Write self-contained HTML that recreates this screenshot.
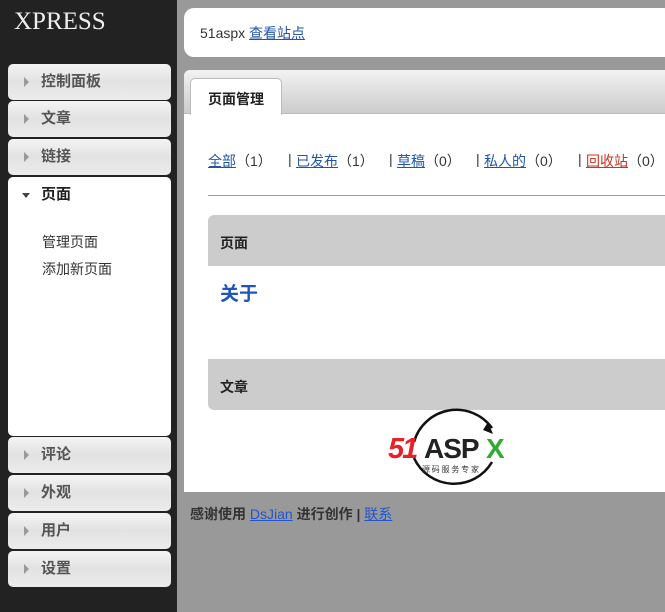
<!DOCTYPE html>
<html><head><meta charset="utf-8"><style>
*{margin:0;padding:0;box-sizing:border-box}
body{width:665px;height:612px;overflow:hidden;background:#999;font-family:"Liberation Sans","Noto Sans CJK SC",sans-serif;font-size:14px;color:#333;position:relative}
#side{position:absolute;left:0;top:0;width:177px;height:612px;background:#222}
#logo{position:absolute;left:14px;top:8px;color:#eee;font-family:"Liberation Serif",serif;font-size:25px}
.mi{position:absolute;left:8px;width:163px;height:36px;border-radius:5px;background:linear-gradient(#f4f4f4,#e2e2e2 50%,#ececec);color:#555;font-size:15px;font-weight:bold;line-height:36px;padding-left:33px}
.mi:before{content:"";position:absolute;left:16px;top:13px;border-left:5px solid #999;border-top:5px solid transparent;border-bottom:5px solid transparent}
.open{background:#fff;height:259px;color:#222}
.open:before{border-top:5px solid #444;border-left:4px solid transparent;border-right:4px solid transparent;border-bottom:0;left:14px;top:16px}
.sub{position:absolute;left:42px;font-size:14px;color:#333}
#hdr{position:absolute;left:184px;top:8px;width:490px;height:49px;background:#fff;border-radius:10px;padding:15px 16px;font-size:14px}
a{color:#2255aa;text-decoration:underline}
#main{position:absolute;left:184px;top:70px;width:490px;height:422px;background:#fff;border-radius:6px 0 0 0;overflow:hidden}
#tabbar{height:44px;background:linear-gradient(#f2f2f2,#ccc);border-bottom:1px solid #bbb;position:relative}
#tab{position:absolute;left:6px;top:8px;width:92px;height:37px;background:#fff;border-radius:5px 5px 0 0;border:1px solid #bbb;border-bottom:none;font-weight:bold;font-size:14px;padding:10px 0 0 17px;color:#222}
.f{position:absolute;top:81px;font-size:14px;color:#333;white-space:nowrap}
#hr{position:absolute;left:24px;top:125px;width:470px;height:1px;background:#999}
#tbl{position:absolute;left:24px;top:145px;width:470px;height:195px;border-radius:6px;overflow:hidden;background:#fff}
.th{height:51px;background:#ccc;font-weight:bold;font-size:14px;padding:18px 12px;color:#222}
.row{height:93px;padding:13px 12px;font-size:19px;font-weight:bold;color:#2255bb}
#foot{position:absolute;left:190px;top:504px;font-size:14px;font-weight:bold;color:#333}
</style></head><body>
<div id="side">
<div id="logo">XPRESS</div>
<div class="mi" style="top:64px">控制面板</div>
<div class="mi" style="top:101px">文章</div>
<div class="mi" style="top:139px">链接</div>
<div class="mi open" style="top:177px;line-height:36px">页面</div>
<div class="sub" style="top:232px">管理页面</div>
<div class="sub" style="top:259px">添加新页面</div>
<div class="mi" style="top:437px">评论</div>
<div class="mi" style="top:475px">外观</div>
<div class="mi" style="top:513px">用户</div>
<div class="mi" style="top:551px">设置</div>
</div>
<div id="hdr">51aspx <a>查看站点</a></div>
<div id="main">
<div id="tabbar"><div id="tab">页面管理</div></div>
<div class="f" style="left:24px"><a>全部</a>（1）</div>
<div class="f" style="left:104px">|</div>
<div class="f" style="left:112px"><a>已发布</a>（1）</div>
<div class="f" style="left:205px">|</div>
<div class="f" style="left:213px"><a>草稿</a>（0）</div>
<div class="f" style="left:292px">|</div>
<div class="f" style="left:300px"><a>私人的</a>（0）</div>
<div class="f" style="left:394px">|</div>
<div class="f" style="left:402px"><a style="color:#cc3322">回收站</a>（0）</div>
<div id="hr"></div>
<div id="tbl"><div class="th">页面</div><div class="row">关于</div><div class="th">文章</div></div>
<svg style="position:absolute;left:200px;top:330px" width="130" height="95" viewBox="0 0 130 95">
<path d="M30 42 A44 44 0 0 1 108 28" fill="none" stroke="#111" stroke-width="2.5"/>
<path d="M104 22 L109 34 L99 30 Z" fill="#111"/>
<path d="M30 58 A44 44 0 0 0 108 62" fill="none" stroke="#111" stroke-width="2.5"/>
<text x="4" y="58" font-family="Liberation Sans" font-style="italic" font-weight="bold" font-size="29" fill="#e8202a" letter-spacing="-2">51</text>
<text x="40" y="58" font-family="Liberation Sans" font-weight="bold" font-size="28" fill="#222" letter-spacing="-1">ASP</text>
<text x="102" y="58" font-family="Liberation Sans" font-weight="bold" font-size="28" fill="#3a3">X</text>
<text x="38" y="72" font-family="Noto Sans CJK SC" font-size="8" fill="#333">源 码 服 务 专 家</text>
</svg>
</div>
<div id="foot">感谢使用 <a style="color:#2255cc;font-weight:normal">DsJian</a> 进行创作 | <a style="color:#2255cc;font-weight:normal">联系</a></div>
</body></html>
